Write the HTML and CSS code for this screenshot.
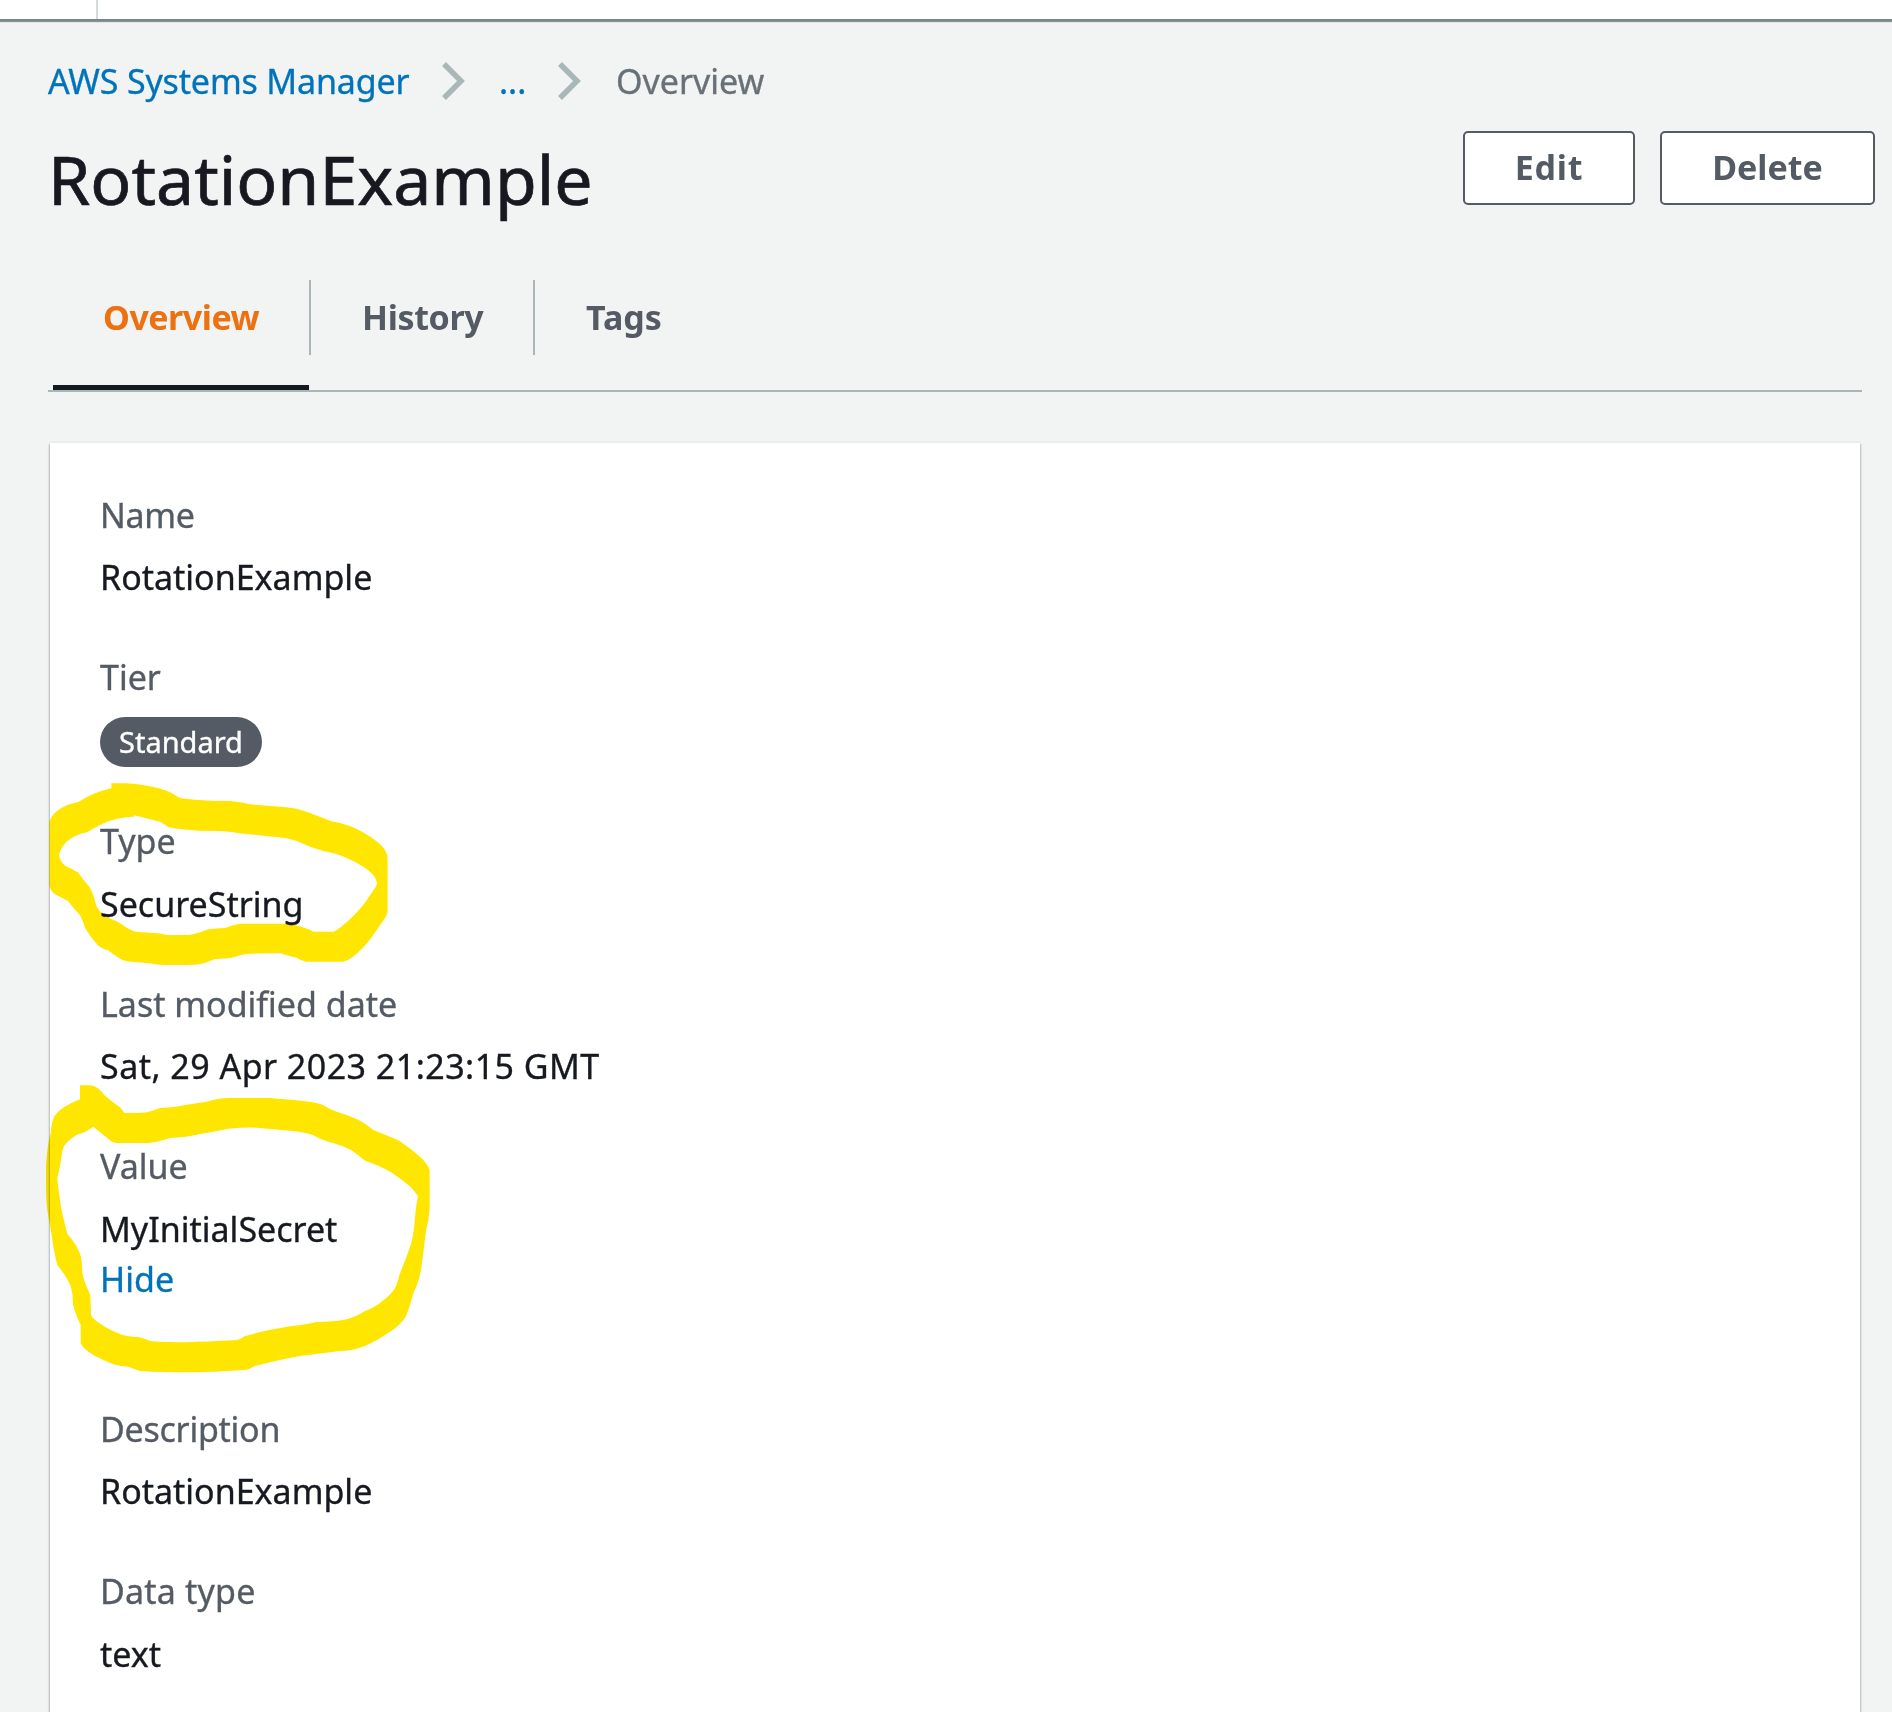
FILE: index.html
```html
<!DOCTYPE html>
<html lang="en">
<head>
<meta charset="utf-8">
<title>RotationExample</title>
<link rel="stylesheet" href="styles.css">
</head>
<body>
<header class="topbar"><div class="topbar-toggle"></div></header>
<main class="page">
  <nav class="breadcrumb">
    <a class="crumb-link crumb-root" href="#">AWS Systems Manager</a>
    <svg class="chevron" viewBox="0 0 24 40"><path d="M3 3 L20 20 L3 37"/></svg>
    <a class="crumb-link crumb-more" href="#">...</a>
    <svg class="chevron" viewBox="0 0 24 40"><path d="M3 3 L20 20 L3 37"/></svg>
    <span class="crumb-current">Overview</span>
  </nav>
  <div class="heading">
    <h1 class="title">RotationExample</h1>
    <div class="actions">
      <button class="button button-edit">Edit</button>
      <button class="button button-delete">Delete</button>
    </div>
  </div>
  <div class="tabs">
    <div class="tab tab-active"><span class="tab-label">Overview</span></div>
    <div class="tab tab-history"><span class="tab-label">History</span></div>
    <div class="tab tab-last"><span class="tab-label">Tags</span></div>
  </div>
  <section class="card">
    <dl class="fields">
      <div class="field"><dt class="name">Name</dt><dd>RotationExample</dd></div>
      <div class="field field-badge"><dt>Tier</dt><dd><span class="badge">Standard</span></dd></div>
      <div class="field field-wide"><dt>Type</dt><dd>SecureString</dd></div>
      <div class="field"><dt>Last modified date</dt><dd class="date">Sat, 29 Apr 2023 21:23:15 GMT</dd></div>
      <div class="field field-value field-wide"><dt>Value</dt><dd>MyInitialSecret<br><a class="hide-link" href="#">Hide</a></dd></div>
      <div class="field"><dt class="description">Description</dt><dd>RotationExample</dd></div>
      <div class="field field-wide"><dt class="data-type">Data type</dt><dd>text</dd></div>
    </dl>
  </section>
</main>
<svg class="marker" viewBox="0 0 450 1400" aria-hidden="true">
  <path transform="translate(30 770) scale(.33333)" fill-rule="evenodd" d="M244 40 H290 Q345 42 410 62 Q425 67 440 79 Q450 86 468 86 Q520 93 600 93 Q630 95 660 103 L770 112 Q800 114 830 125 L905 154 Q950 162 985 179 Q1025 200 1050 222 Q1073 245 1073 265 V425 Q1070 440 1050 465 Q1025 505 1000 532 Q965 570 940 575 H828 Q815 573 800 563 Q780 560 752 550 Q690 549 650 552 Q630 554 610 562 Q590 567 555 567 Q520 583 495 584 Q440 586 385 584 Q365 579 340 578 Q300 577 280 571 Q260 562 235 541 Q215 537 203 525 Q180 500 165 473 Q158 450 150 436 Q130 415 115 394 Q100 385 72 371 Q60 360 58 345 V155 Q65 135 82 122 Q105 104 145 96 Q190 67 244 55 Z
    M313 136 Q355 147 390 155 Q405 163 415 171 Q425 176 510 182 Q580 182 605 186 Q625 190 650 192 L735 201 Q770 202 800 213 Q840 232 880 243 Q925 252 945 262 Q990 282 1015 301 Q1040 322 1041 340 Q1040 350 1025 368 Q1000 408 972 436 Q930 478 910 485 H850 Q838 477 825 474 Q795 462 765 461 H630 Q605 465 585 474 Q555 475 535 478 Q495 494 475 495 H410 Q390 489 370 489 Q325 487 312 484 Q290 476 275 463 Q260 452 230 442 Q207 427 198 404 Q190 370 178 350 Q160 330 145 308 Q125 295 105 287 Q87 270 87 252 Q93 233 108 217 Q135 193 173 186 Q215 160 245 151 Q285 139 313 140 Z"/>
  <path transform="translate(30 1070) scale(.33333)" fill-rule="evenodd" d="M150 46 H182 Q205 50 222 74 Q245 95 270 112 L284 129 Q330 130 355 126 Q375 120 390 114 Q440 112 465 105 L530 95 Q560 85 600 84 H720 L750 87 Q860 94 880 106 Q900 119 920 125 Q955 135 985 149 Q1010 162 1030 180 Q1070 196 1108 212 Q1145 238 1170 260 Q1192 280 1199 300 V415 Q1197 450 1188 483 Q1180 550 1173 600 Q1165 640 1150 670 Q1135 725 1127 740 Q1110 768 1070 792 Q1020 825 985 835 Q965 842 925 844 Q870 851 815 857 Q750 868 675 888 Q660 897 645 900 Q530 907 470 907 Q370 906 330 903 Q310 895 295 890 Q265 888 250 883 Q220 871 190 855 Q160 838 152 820 V765 Q135 730 129 703 Q129 672 122 647 Q108 617 82 585 Q72 550 65 495 Q57 450 52 420 Q48 390 48 340 V285 Q52 225 62 190 Q65 150 74 137 Q90 112 150 88 Z
    M190 170 Q220 195 235 206 Q248 219 262 219 H355 Q380 217 420 204 Q470 202 510 192 Q570 182 595 176 Q640 172 680 173 L780 182 Q825 185 850 196 Q870 208 895 215 Q935 225 967 242 Q985 255 1005 272 Q1050 287 1082 306 Q1125 335 1145 354 L1164 378 Q1158 405 1155 440 Q1152 490 1143 522 Q1125 575 1108 615 Q1100 650 1093 657 Q1080 677 1058 692 Q1035 712 1005 723 Q975 742 950 748 Q910 756 860 756 Q820 765 780 769 Q710 780 645 798 Q630 810 612 811 Q530 815 470 817 Q390 816 360 813 Q335 802 320 801 Q295 800 275 794 Q240 780 220 767 Q190 750 183 735 L181 675 Q160 630 157 610 Q157 570 150 552 Q138 520 112 492 Q100 445 93 410 Q85 360 82 325 Q92 280 94 263 Q97 235 104 226 Q120 205 144 193 Q162 190 190 170 Z"/>
</svg>
</body>
</html>
```
FILE: styles.css
```css
* { box-sizing: border-box; }
body { position: relative; margin: 0; height: 1712px; overflow: hidden; background: #f2f4f3; font: 34px/50px "Noto Sans", sans-serif; color: #16191f; -webkit-text-stroke: .35px; }
.topbar { height: 21px; background: #fff; border-bottom: 2px solid #7a8788; box-shadow: 0 1px 1px #879596; display: flex; }
.topbar-toggle { width: 98px; border-right: 2px solid #d5dbdb; }
a { color: #0073bb; text-decoration: none; }
.page { padding: 35px 30px 0 48px; }
.breadcrumb { display: flex; height: 50px; align-items: center; }
.crumb-root { letter-spacing: -.15px; width: 393px; }
.crumb-more { width: 58px; margin-left: 34px; }
.chevron { width: 24px; height: 40px; fill: none; stroke: #aab7b8; stroke-width: 5.5; }
.crumb-current { color: #687078; margin-left: 35px; }
.heading { display: flex; justify-content: space-between; height: 174px; margin-right: -13px; }
.title { margin: 23px 0 0; font-size: 68px; line-height: 100px; font-weight: 400; -webkit-text-stroke: .7px; }
.actions { display: flex; gap: 25px; margin-top: 25px; }
.button { height: 74px; background: #fff; border: 2px solid #545b64; border-radius: 5px; color: #545b64; font: bold 34px/50px "Noto Sans", sans-serif; padding: 0 0 2px; -webkit-text-stroke: 0; }
.button-edit { width: 172px; letter-spacing: .8px; }
.button-delete { width: 215px; }
.tabs { display: flex; height: 112px; width: 1814px; border-bottom: 2px solid #aab7b8; padding-left: 5px; }
.tab { font-weight: 700; color: #545b64; letter-spacing: -.35px; -webkit-text-stroke: 0; }
.tab-label { display: block; height: 75px; line-height: 75px; padding: 0 50px; border-right: 2px solid #aab7b8; }
.tab-active { width: 258px; color: #ec7211; letter-spacing: -.5px; }
.tab-active::after { content: ""; display: block; width: 256px; height: 5px; margin-top: 30px; background: #16191f; }
.tab-history { width: 224px; }
.tab-history .tab-label { padding: 0 0 0 51px; }
.tab-last .tab-label { padding-left: 51px; border: 0; letter-spacing: 0; }
.card { width: 1810px; height: 1300px; margin: 49px 0 0 2px; padding: 47px 50px; background: #fff; border-top: 2px solid #eaeded; box-shadow: 0 3px 2px rgba(0, 28, 36, .3), 1px 3px 2px rgba(0, 28, 36, .15), -1px 3px 2px rgba(0, 28, 36, .15); }
.fields { margin: 0; }
.field { margin-bottom: 50px; }
dt { color: #545b64; margin-bottom: 12px; }
dd { margin: 0; }
.field-badge { margin-bottom: 49px; }
.field-badge dt { margin-bottom: 15px; }
.field-wide dt { margin-bottom: 13px; }
.field-value { margin-bottom: 100px; }
.badge { display: block; width: 162px; height: 50px; border-radius: 25px; background: #545b64; color: #fff; font-size: 29px; text-align: center; }
.name { letter-spacing: -.3px; }
.description { letter-spacing: -.25px; }
.data-type { letter-spacing: .2px; }
.date { letter-spacing: .47px; }
.marker { position: absolute; left: 0; top: 0; width: 450px; height: 1400px; fill: #ffe600; mix-blend-mode: multiply; pointer-events: none; -webkit-text-stroke: 0; }
```
